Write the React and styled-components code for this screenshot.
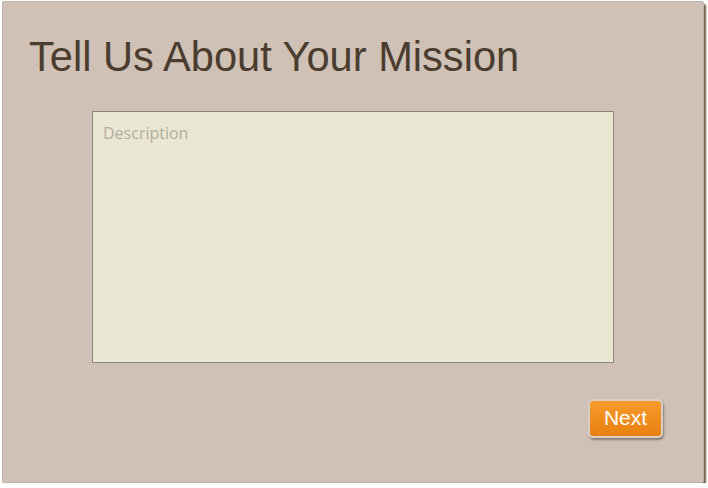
import React from "react";
import styled, { createGlobalStyle } from "styled-components";

const Global = createGlobalStyle`
  html, body { margin: 0; padding: 0; background: #ffffff; }
  * { box-sizing: border-box; }
`;

const Panel = styled.div`
  margin: 1px 0 0 2px;
  width: 702px;
  height: 482px;
  background: #cfc1b6;
  border: 1px solid #bdb3ab;
  border-radius: 2px;
  box-shadow: 2px 3px 2px rgba(105, 82, 58, 0.95);
  display: flex;
  flex-direction: column;
  padding: 30px 40px 0 26px;
`;

const Title = styled.h1`
  margin: 0;
  font-family: "Liberation Sans", Arial, sans-serif;
  font-weight: 400;
  font-size: 41.6px;
  line-height: 50px;
  color: #4a3c2e;
`;

const Field = styled.textarea`
  margin: 29px 0 0 63px;
  width: 522px;
  height: 252px;
  background: #eae7d3;
  border: 1px solid #8b8580;
  resize: none;
  padding: 10px 10px;
  font-family: "Open Sans", sans-serif;
  font-size: 16px;
  color: #4a3a2a;
  outline: none;
  &::placeholder { color: #b2aea2; }
`;

const Footer = styled.div`
  display: flex;
  justify-content: flex-end;
  margin-top: 36px;
`;

const Button = styled.button`
  width: 75px;
  height: 39px;
  border: 2px solid #d8d0c8;
  border-radius: 5px;
  background: linear-gradient(#f69c2b, #e97f0f);
  color: #ffffff;
  font-family: "Liberation Sans", Arial, sans-serif;
  font-size: 21px;
  padding: 0 0 2px;
  box-shadow: 1px 2px 2px rgba(90, 80, 70, 0.6);
  cursor: pointer;
`;

export default function App() {
  return (
    <>
      <Global />
      <Panel>
        <Title>Tell Us About Your Mission</Title>
        <Field placeholder="Description" />
        <Footer>
          <Button>Next</Button>
        </Footer>
      </Panel>
    </>
  );
}
